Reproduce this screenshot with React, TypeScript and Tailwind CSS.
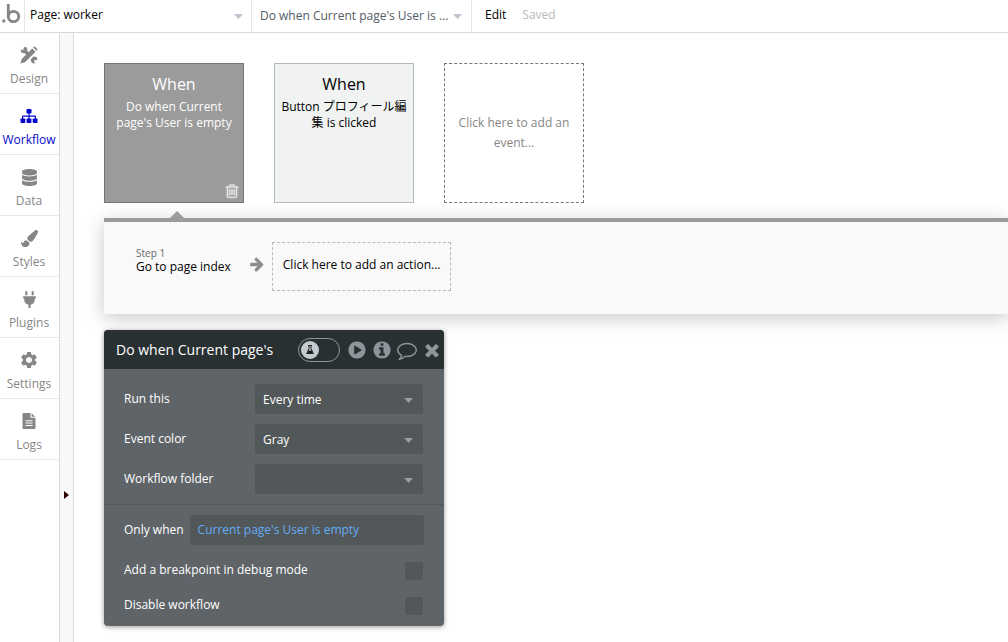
import type { ReactNode } from 'react'
import { FaDatabase, FaPaintBrush, FaPlug } from 'react-icons/fa'
import { MdSettings } from 'react-icons/md'

interface NavItem {
  label: string
  icon: ReactNode
  active?: boolean
}

function DesignIcon() {
  return (
    <svg width="18" height="18" viewBox="0 0 18 18" fill="currentColor">
      <path d="M5 .8L3.300 2.500 3.600 3.700 2.500 4 .9 3.500C.2 6 2 7.800 4.600 7.200L6.800 9.300 9.300 6.800 7.200 4.700C7.700 2.800 6.900 1.200 5 .8z" />
      <path d="M10.800 13.300L13.200 10.800C15.800 10 17.800 11.800 17.200 14.300L15.500 13.900 14.400 14.200 14.100 15.300 15 17.200C12.300 18 10.600 16 10.800 13.300z" />
      <path d="M12.200 2.400L15.600 5.800 5 16.300.5 17.500 1.700 13zM13.200 1.500L14 .7Q14.500.2 15.100.7L17.300 2.900Q17.800 3.500 17.300 4L16.500 4.800z" />
    </svg>
  )
}

function WorkflowIcon() {
  return (
    <svg width="18" height="18" viewBox="0 0 18 18" fill="currentColor">
      <rect x="6.500" y="2" width="5" height="4.500" rx="0.800" />
      <path d="M8.400 6h1.200v2.500h5.400q1 0 1 1V12h-1.200V9.700H9.600V12H8.400V9.700H3.200V12H2V9.500q0-1 1-1h5.400z" />
      <rect x="0.500" y="11.500" width="4.800" height="4.500" rx="0.800" />
      <rect x="6.600" y="11.500" width="4.800" height="4.500" rx="0.800" />
      <rect x="12.700" y="11.500" width="4.800" height="4.500" rx="0.800" />
    </svg>
  )
}

function LogsIcon() {
  return (
    <svg width="18" height="18" viewBox="0 0 18 18" fill="currentColor">
      <path
        fillRule="evenodd"
        d="M3.500 1H10.500V5.700H15.500V16Q15.500 17 14.500 17H3.500Q2.500 17 2.500 16V2Q2.500 1 3.500 1zM5.500 8.300V9.300H12.500V8.300zM5.500 10.600V11.600H12.500V10.600zM5.500 12.900V13.900H12.500V12.900z"
      />
      <path d="M11.600 1.200L15.200 4.700H11.600z" />
    </svg>
  )
}

function Glyph({ d, className }: { d: string; className: string }) {
  return (
    <svg viewBox="0 0 1792 1792" fill="currentColor" className={className}>
      <path d={d} />
    </svg>
  )
}

const glyphs = {
  trash: 'M704 736v576q0 14-9 23t-23 9h-64q-14 0-23-9t-9-23v-576q0-14 9-23t23-9h64q14 0 23 9t9 23zm256 0v576q0 14-9 23t-23 9h-64q-14 0-23-9t-9-23v-576q0-14 9-23t23-9h64q14 0 23 9t9 23zm256 0v576q0 14-9 23t-23 9h-64q-14 0-23-9t-9-23v-576q0-14 9-23t23-9h64q14 0 23 9t9 23zm128 724v-948h-896v948q0 22 7 40.500t14.500 27 10.500 8.500h832q3 0 10.500-8.500t14.500-27 7-40.500zm-672-1076h448l-48-117q-7-9-17-11h-317q-10 2-17 11zm928 32v64q0 14-9 23t-23 9h-96v948q0 83-47 143.500t-113 60.500h-832q-66 0-113-58.500t-47-141.500v-952h-96q-14 0-23-9t-9-23v-64q0-14 9-23t23-9h309l70-167q15-37 54-63t79-26h320q40 0 79 26t54 63l70 167h309q14 0 23 9t9 23z',
  arrow: 'M1600 960q0 54-37 91l-651 651q-39 37-91 37-51 0-90-37l-75-75q-38-38-38-91t38-91l293-293h-704q-52 0-84.500-37.500t-32.500-90.500v-128q0-53 32.500-90.500t84.500-37.500h704l-293-294q-38-36-38-90t38-90l75-75q38-38 90-38 53 0 91 38l651 651q37 35 37 90z',
  play: 'M896 128q209 0 385.500 103t279.500 279.500 103 385.500-103 385.500-279.500 279.500-385.500 103-385.500-103-279.500-279.500-103-385.500 103-385.500 279.500-279.500 385.500-103zm384 823q32-18 32-55t-32-55l-544-320q-31-19-64-1-32 19-32 55v640q0 36 32 55 16 8 32 8 17 0 32-9z',
  info: 'M1152 1376v-160q0-14-9-23t-23-9h-96v-512q0-14-9-23t-23-9h-320q-14 0-23 9t-9 23v160q0 14 9 23t23 9h96v320h-96q-14 0-23 9t-9 23v160q0 14 9 23t23 9h448q14 0 23-9t9-23zm-128-896v-160q0-14-9-23t-23-9h-192q-14 0-23 9t-9 23v160q0 14 9 23t23 9h192q14 0 23-9t9-23zm640 416q0 209-103 385.500t-279.500 279.500-385.500 103-385.500-103-279.500-279.500-103-385.500 103-385.500 279.500-279.500 385.500-103 385.500 103 279.500 279.500 103 385.500z',
  comment: 'M896 384q-204 0-381.500 69.500t-282 187.500-104.500 255q0 112 71.500 213.500t201.500 175.500l87 50-27 96q-24 91-70 172 152-63 275-171l43-38 57 6q69 8 130 8 204 0 381.500-69.500t282-187.500 104.500-255-104.500-255-282-187.500-381.500-69.500zm896 512q0 174-120 321.500t-326 233-450 85.500q-70 0-145-8-198 175-460 242-49 14-114 22h-5q-15 0-27-10.500t-16-27.500v-1q-3-4-.5-12t2-10 4.500-9.500l6-9 7-8.500 8-9q7-8 31-34.500t34.500-38 31-39.500 32.500-51 27-59 26-76q-157-89-247.500-220t-90.500-281q0-174 120-321.500t326-233 450-85.500 450 85.500 326 233 120 321.500z',
  close: 'M1490 1322q0 40-28 68l-136 136q-28 28-68 28t-68-28l-294-294-294 294q-28 28-68 28t-68-28l-136-136q-28-28-28-68t28-68l294-294-294-294q-28-28-28-68t28-68l136-136q28-28 68-28t68 28l294 294 294-294q28-28 68-28t68 28l136 136q28 28 28 68t-28 68l-294 294 294 294q28 28 28 68z',
}

function Caret({ className }: { className: string }) {
  return (
    <svg width="9" height="5" viewBox="0 0 9 5" fill="currentColor" className={className}>
      <path d="M0 0h9L4.500 5z" />
    </svg>
  )
}

const navItems: NavItem[] = [
  { label: 'Design', icon: <DesignIcon /> },
  { label: 'Workflow', icon: <WorkflowIcon />, active: true },
  { label: 'Data', icon: <FaDatabase size={17} /> },
  { label: 'Styles', icon: <FaPaintBrush size={17} /> },
  { label: 'Plugins', icon: <FaPlug size={17} /> },
  { label: 'Settings', icon: <MdSettings size={20} /> },
  { label: 'Logs', icon: <LogsIcon /> },
]

const fields = [
  { id: 'run-this', label: 'Run this', options: ['Every time', 'Just once'] },
  { id: 'event-color', label: 'Event color', options: ['Gray', 'Blue', 'Green'] },
  { id: 'workflow-folder', label: 'Workflow folder', options: [''] },
]

const toggles = [
  { id: 'breakpoint', label: 'Add a breakpoint in debug mode' },
  { id: 'disable', label: 'Disable workflow' },
]

function TopBar() {
  return (
    <header className="flex h-[33px] border-b border-[#d9d9d9] bg-white">
      <a href="#" aria-label="Home" className="flex w-[25px] items-center border-r border-[#e6e6e6] pb-1 pl-0.5 text-[#868686]">
        <svg width="19" height="22" viewBox="0 0 19 22" fill="none">
          <circle cx="1.800" cy="18" r="1.700" fill="currentColor" />
          <path d="M6.300 1v12.500" stroke="currentColor" strokeWidth="2.800" />
          <circle cx="11.500" cy="13.500" r="5.200" stroke="currentColor" strokeWidth="2.800" />
        </svg>
      </a>
      <div className="relative w-[227px] border-r border-[#e6e6e6]">
        <select aria-label="Page" className="h-[30px] w-full appearance-none bg-transparent pl-[5px] text-xs text-black">
          <option>Page: worker</option>
        </select>
        <Caret className="pointer-events-none absolute top-3.5 right-2 text-[#bcc4cf]" />
      </div>
      <div className="relative w-[220px] border-r border-[#e6e6e6]">
        <select aria-label="Workflow" className="h-8 w-full appearance-none bg-transparent pl-2 text-xs text-[#515c66]">
          <option>Do when Current page's User is ...</option>
        </select>
        <Caret className="pointer-events-none absolute top-3.5 right-[9px] text-[#bcc4cf]" />
      </div>
      <div className="flex h-[30px] items-center gap-4 pl-[13px] text-xs">
        <button className="text-black">Edit</button>
        <span className="text-[#b9b9b9]">Saved</span>
      </div>
    </header>
  )
}

function SideNav() {
  return (
    <nav className="w-[60px] shrink-0 border-r border-[#d9d9d9] bg-white">
      {navItems.map(item => (
        <a
          key={item.label}
          href="#"
          className={`flex h-[61px] flex-col items-center border-b border-[#dfebef] pt-[13px] pr-px text-xs ${item.active ? 'text-[#0808cc]' : 'text-[#868686]'}`}
        >
          <span className="flex h-[18px] items-center">{item.icon}</span>
          <span className="mt-1.5 leading-[18px]">{item.label}</span>
        </a>
      ))}
    </nav>
  )
}

function EventCards() {
  return (
    <div className="flex gap-[30px]">
      <div className="flex size-[140px] flex-col border border-[#777] bg-[#9b9b9b] pt-2.5 text-center text-white">
        <h2 className="text-base leading-5">When</h2>
        <p className="mt-[5px] px-1.5 text-xs leading-4">Do when Current page's User is empty</p>
        <button aria-label="Delete event" className="mt-auto mr-[3px] mb-[3px] self-end text-[#e4e4e4]">
          <Glyph d={glyphs.trash} className="size-4 stroke-current stroke-[60]" />
        </button>
      </div>
      <div className="size-[140px] border border-[#b0bcc0] bg-[#f0f3f2] px-1.5 pt-2.5 text-center text-black">
        <h2 className="text-base leading-5">When</h2>
        <p className="mt-[5px] text-xs leading-4">Button プロフィール編集 is clicked</p>
      </div>
      <button className="size-[140px] border border-dashed border-[#777] px-2.5 text-xs leading-5 text-[#868686]">
        Click here to add an event...
      </button>
    </div>
  )
}

function ActionsPanel() {
  return (
    <section className="mt-2">
      <svg width="14" height="7" viewBox="0 0 14 7" className="ml-[66px] block text-[#9b9b9b]">
        <path d="M0 7L7 0l7 7z" fill="currentColor" />
      </svg>
      <div className="flex h-24 items-start border-t-4 border-[#9b9b9b] bg-[#f9f9f9] pt-5 pl-8 shadow-[0_4px_18px_rgba(0,0,0,0.22)]">
        <div className="pt-[5px]">
          <p className="text-[10px] leading-3 text-[#666]">Step 1</p>
          <p className="text-xs leading-4 text-black">Go to page index</p>
        </div>
        <Glyph d={glyphs.arrow} className="mt-3.5 mr-[7px] ml-[18px] size-4 text-[#8c8c8c]" />
        <button className="h-[49px] border border-dashed border-[#b4bcbc] px-2.5 pb-[3px] text-xs text-black">
          Click here to add an action...
        </button>
      </div>
    </section>
  )
}

function PropertyEditor() {
  return (
    <section className="mt-4 w-[340px] overflow-hidden rounded bg-[#5f6468] text-xs text-white shadow-[0_1px_5px_rgba(0,0,0,0.4)]">
      <header className="flex h-[39px] items-center bg-[#283032] pr-0.5 pl-3 text-[#8d979b]">
        <h2 className="flex-1 text-sm text-white">Do when Current page's</h2>
        <label className="flex h-6 w-[42px] items-center rounded-full border border-[#8d979b] pl-0.5">
          <input type="checkbox" aria-label="Show experiments" className="sr-only" />
          <span className="flex size-[18px] items-center justify-center rounded-full bg-[#c3cad0] text-[#222]">
            <svg width="8" height="9" viewBox="0 0 8 9" fill="none" stroke="currentColor">
              <path d="M2 .5h4M3 .5v3.200L.7 8.500h6.600L5 3.700V.5" />
              <path d="M2.300 5.500h3.400L7 8.500H1z" fill="currentColor" stroke="none" />
            </svg>
          </span>
        </label>
        <div className="ml-[7px] flex items-center gap-[5px]">
          <button aria-label="Play">
            <Glyph d={glyphs.play} className="size-5" />
          </button>
          <button aria-label="Info">
            <Glyph d={glyphs.info} className="size-5" />
          </button>
          <button aria-label="Comment">
            <Glyph d={glyphs.comment} className="size-5" />
          </button>
          <button aria-label="Close">
            <Glyph d={glyphs.close} className="size-5" />
          </button>
        </div>
      </header>

      <div className="flex flex-col gap-2.5 border-b border-[#54595c] pt-[15px] pr-[21px] pb-2.5 pl-5">
        {fields.map(field => (
          <div key={field.id} className="flex items-center justify-between">
            <label htmlFor={field.id}>{field.label}</label>
            <div className="relative w-[168px]">
              <select id={field.id} className="h-[30px] w-full appearance-none rounded-xs bg-[#525759] px-2 pt-px text-xs text-white">
                {field.options.map(option => (
                  <option key={option}>{option}</option>
                ))}
              </select>
              <Caret className="pointer-events-none absolute top-3.5 right-2.5 text-[#989da0]" />
            </div>
          </div>
        ))}
      </div>

      <div className="px-5 pt-2.5 pb-[3px]">
        <div className="flex items-center gap-1.5">
          <label htmlFor="only-when" className="shrink-0">Only when</label>
          <input
            id="only-when"
            type="text"
            defaultValue="Current page's User is empty"
            className="h-[30px] min-w-0 flex-1 rounded-xs bg-[#525759] px-2 pb-0.5 text-xs text-[#62acf5]"
          />
        </div>
        <div className="mt-2">
          {toggles.map(toggle => (
            <div key={toggle.id} className="flex h-[35px] items-center justify-between pr-px">
              <label htmlFor={toggle.id} className="pb-0.5">{toggle.label}</label>
              <input id={toggle.id} type="checkbox" className="size-[18px] appearance-none rounded-xs bg-[#525759]" />
            </div>
          ))}
        </div>
      </div>
    </section>
  )
}

export default function App() {
  return (
    <div className="flex min-h-screen flex-col bg-white font-['Open_Sans','Noto_Sans_CJK_JP',sans-serif]">
      <TopBar />
      <div className="flex flex-1">
        <SideNav />
        <button aria-label="Expand panel" className="flex w-3.5 shrink-0 items-end border-r border-[#d9d9d9] bg-[#f8f8f8] pb-[143px] pl-1">
          <svg width="5" height="8" viewBox="0 0 5 8">
            <path d="M0 0l5 4-5 4z" fill="#2a0000" />
          </svg>
        </button>
        <main className="min-w-0 flex-1 overflow-hidden pt-[30px] pb-4 pl-[30px]">
          <EventCards />
          <ActionsPanel />
          <PropertyEditor />
        </main>
      </div>
    </div>
  )
}
